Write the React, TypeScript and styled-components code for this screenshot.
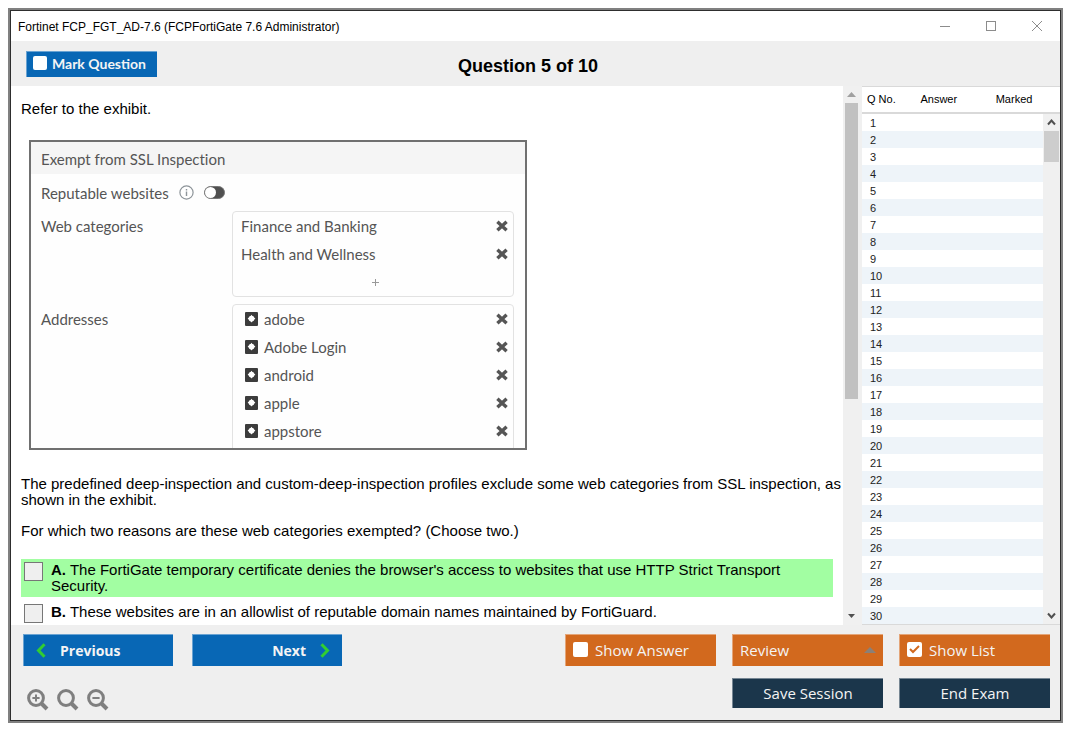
import React, { useState } from "react";
import styled, { createGlobalStyle, css } from "styled-components";

const GlobalStyle = createGlobalStyle`
  *, *::before, *::after { box-sizing: border-box; }
  body { margin: 0; background: #ffffff; color: #000000; font-family: "Liberation Sans", Arial, sans-serif; }
  button { font: inherit; margin: 0; cursor: pointer; }
  p { margin: 0; }
`;

const Page = styled.div`
  display: flex;
  height: 100vh;
  min-height: 480px;
  padding: 8px 12px 12px 8px;
`;

const Bezel = styled.div`
  display: flex;
  flex: 1;
  min-width: 0;
  border: 2px solid #808080;
`;

const Window = styled.main`
  display: flex;
  flex-direction: column;
  flex: 1;
  min-width: 0;
  border: 1px solid #2e2e2e;
  background: #efefef;
`;

const TitleBar = styled.header`
  display: flex;
  align-items: center;
  justify-content: space-between;
  height: 30px;
  padding: 0 9px 0 7px;
  background: #ffffff;
`;

const WindowTitle = styled.h1`
  margin: 0;
  padding-top: 2px;
  font-size: 12px;
  font-weight: 400;
  line-height: 16px;
`;

const WindowButtons = styled.div`
  display: flex;
  gap: 18px;
`;

const WindowButton = styled.button`
  display: flex;
  align-items: center;
  justify-content: center;
  width: 28px;
  height: 28px;
  padding: 0;
  border: 0;
  background: transparent;
  color: #8c8c8c;
`;

const Toolbar = styled.div`
  display: grid;
  grid-template-columns: 1fr auto 1fr;
  align-items: center;
  height: 45px;
  padding: 0 30px 0 15px;
`;

const Counter = styled.h2`
  margin: 0;
  padding-top: 4px;
  font-size: 18px;
  font-weight: 700;
  line-height: 24px;
`;

const tones = { blue: "#0867b5", orange: "#d2691e", navy: "#1b364b" };

const face = css<{ $tone: keyof typeof tones }>`
  display: flex;
  align-items: center;
  border: 0;
  border-top: 1px solid #ffffff66;
  border-left: 1px solid #ffffff66;
  background: ${(p) => tones[p.$tone]};
  color: #f4f4f4;
  font-family: "Open Sans", "Noto Sans", sans-serif;
  white-space: nowrap;
`;

const MarkLabel = styled.label`
  ${face}
  justify-self: start;
  gap: 5px;
  height: 26px;
  width: 131px;
  padding: 0 6px 2px;
  font-family: Lato, "Open Sans", sans-serif;
  font-size: 14px;
  font-weight: 700;
  cursor: pointer;
`;

const ToggleLabel = styled.label`
  ${face}
  gap: 7px;
  width: 151px;
  height: 32px;
  padding: 0 7px 2px;
  font-size: 15px;
  cursor: pointer;
`;

const ActionButton = styled.button<{ $tone: keyof typeof tones; $align?: string; $bold?: boolean; $tall?: boolean }>`
  ${face}
  justify-content: ${(p) => p.$align || "center"};
  gap: ${(p) => (p.$bold ? 14 : 7)}px;
  width: ${(p) => (p.$bold ? 150 : 151)}px;
  height: ${(p) => (p.$tall ? 32 : 30)}px;
  padding: ${(p) => (p.$bold ? "0 12px" : "0 7px 2px")};
  font-size: ${(p) => (p.$bold ? 14 : 15)}px;
  font-weight: ${(p) => (p.$bold ? 700 : 400)};
`;

const Tick = styled.input<{ $size: number }>`
  appearance: none;
  flex: none;
  width: ${(p) => p.$size}px;
  height: ${(p) => p.$size}px;
  margin: 0;
  border-radius: 2px;
  background: #ffffff;
  cursor: pointer;

  &:checked {
    background: #ffffff
      url("data:image/svg+xml,%3Csvg xmlns='http://www.w3.org/2000/svg' viewBox='0 0 15 15'%3E%3Cpath d='M3 7l3 3 6-6' fill='none' stroke='%23d2691e' stroke-width='2'/%3E%3C/svg%3E")
      center / 100% no-repeat;
  }
`;

const Body = styled.div`
  display: flex;
  flex: 1;
  min-height: 0;
`;

const Question = styled.section`
  flex: 1;
  min-width: 0;
  overflow: hidden;
  padding: 15px 0 0 10px;
  background: #ffffff;
  font-size: 15px;
  line-height: 16px;
`;

const Paragraph = styled.p`
  margin-bottom: 15px;
`;

const Exhibit = styled.figure`
  max-width: 498px;
  height: 310px;
  margin: 23px 8px 26px;
  overflow: hidden;
  border: 2px solid #707070;
  background: #fefefe;
  color: #555555;
  font-family: Lato, sans-serif;
  font-size: 15px;
  font-variant-ligatures: none;
  line-height: 28px;
`;

const ExhibitTitle = styled.figcaption`
  padding: 3px 10px 1px;
  background: #f5f5f5;
`;

const ExhibitRow = styled.div`
  display: flex;
  align-items: center;
  gap: 10px;
  height: 37px;
  padding: 0 10px;
`;

const ExhibitField = styled.div`
  display: grid;
  grid-template-columns: 191px 1fr;
  align-items: start;
  margin-bottom: 7px;
  padding: 0 11px 0 10px;
`;

const FieldName = styled.span`
  padding-top: 1px;
`;

const Entries = styled.ul<{ $long?: boolean }>`
  min-height: ${(p) => (p.$long ? 168 : 84)}px;
  margin: 0;
  padding: 0 4px 0 8px;
  border: 1px solid #e2e2e2;
  border-radius: 4px;
  list-style: none;
`;

const Entry = styled.li<{ $icon?: boolean }>`
  display: flex;
  align-items: center;
  gap: 6px;
  height: 28px;
  padding-left: ${(p) => (p.$icon ? 4 : 0)}px;
`;

const EntryName = styled.span`
  flex: 1;
`;

const IconButton = styled.button`
  display: flex;
  align-items: center;
  justify-content: center;
  padding: 0;
  border: 0;
  background: transparent;
  color: inherit;
`;

const AddButton = styled(IconButton)`
  flex: 1;
  color: #999999;
`;

const Answers = styled.div`
  display: flex;
  flex-direction: column;
  gap: 4px;
  padding: 5px 10px 0 0;
`;

const Answer = styled.label<{ $correct?: boolean }>`
  display: flex;
  align-items: flex-start;
  gap: 8px;
  padding: 3px;
  background: ${(p) => (p.$correct ? "#a2fea2" : "transparent")};
`;

const AnswerBox = styled.input`
  appearance: none;
  flex: none;
  width: 19px;
  height: 19px;
  margin: 0;
  border: 1px solid #777777;
  background: #efefef;

  &:checked { background: #0867b5; }
`;

const ScrollTrack = styled.div<{ $wide?: boolean }>`
  display: flex;
  flex-direction: column;
  align-items: center;
  flex: none;
  width: ${(p) => (p.$wide ? 19 : 16)}px;
  padding-right: ${(p) => (p.$wide ? 3 : 0)}px;
  background: #f0f0f0;
`;

const ScrollArrow = styled(IconButton)`
  width: 15px;
  height: 17px;
  color: #505050;
`;

const ScrollThumb = styled.div<{ $size: string; $wide?: boolean }>`
  width: ${(p) => (p.$wide ? 13 : 15)}px;
  height: ${(p) => p.$size};
  margin-bottom: auto;
  background: ${(p) => (p.$wide ? "#c1c1c1" : "#cdcdcd")};
`;

const ListPane = styled.aside`
  display: flex;
  flex-direction: column;
  flex: none;
  width: 198px;
  border-top: 1px solid #d9d9d9;
  border-bottom: 1px solid #d9d9d9;
  background: #ffffff;
  font-size: 11px;
`;

const ListScroll = styled.div`
  position: relative;
  display: flex;
  flex: 1;
  min-height: 0;
`;

const TableClip = styled.div`
  flex: 1;
  overflow: hidden;
`;

const Table = styled.table`
  width: 198px;
  border-collapse: collapse;
  table-layout: fixed;
  text-align: left;
`;

const HeadCell = styled.th`
  height: 26px;
  padding: 0 0 2px 5px;
  border-bottom: 2px solid #d9d9d9;
  font-weight: 400;
`;

const Row = styled.tr<{ $shaded: boolean }>`
  background: ${(p) => (p.$shaded ? "#eef4f9" : "#ffffff")};
`;

const Cell = styled.td`
  height: 17px;
  padding: 1px 0 0 8px;
  color: #222222;
  line-height: 16px;
`;

const ListTrack = styled.div`
  position: absolute;
  top: 27px;
  right: 0;
  bottom: 0;
  display: flex;
  padding-right: 1px;
  background: #f0f0f0;
`;

const Footer = styled.footer`
  display: flex;
  flex-direction: column;
  gap: 12px;
  padding: 9px 10px 12px 12px;
`;

const FooterRow = styled.div<{ $height: number }>`
  display: flex;
  align-items: flex-start;
  justify-content: space-between;
  height: ${(p) => p.$height}px;
`;

const Group = styled.div<{ $gap: number }>`
  display: flex;
  gap: ${(p) => p.$gap}px;
`;

const ZoomGroup = styled.div`
  display: flex;
  gap: 8px;
  padding: 11px 4px 0;
  color: #7f7f7f;
`;

const CrossIcon = () => (
  <svg width="14" height="12" viewBox="0 0 14 12" stroke="currentColor" strokeWidth="3.4" aria-hidden="true">
    <path d="M2.4 1.8L11.6 10.2M11.6 1.8L2.4 10.2" />
  </svg>
);

const AddressIcon = () => (
  <svg width="13" height="14" viewBox="0 0 13 14" aria-hidden="true">
    <rect width="13" height="14" rx="1" fill="#3c3c3c" />
    <path d="M6.5 2.8L8 5 10.4 6.5 8 8.4 6.5 10.4 5 8.4 2.6 6.5 5 5z" fill="#ffffff" />
    <circle cx="6.5" cy="6.6" r="2.9" fill="#ffffff" />
  </svg>
);

const Chevron = ({ right }: { right?: boolean }) => (
  <svg width="10" height="15" viewBox="0 0 10 15" fill="none" stroke="#32cd32" strokeWidth="3" aria-hidden="true">
    <path d={right ? "M1.5 1.2L7.5 7.5 1.5 13.8" : "M8.5 1.2L2.5 7.5 8.5 13.8"} />
  </svg>
);

const Magnifier = ({ sign }: { sign?: string }) => (
  <svg width="22" height="22" viewBox="0 0 22 22" fill="none" stroke="currentColor" aria-hidden="true">
    <circle cx="9" cy="9" r="7.4" strokeWidth="3" />
    <path d="M14 14L20 20" strokeWidth="4" />
    {sign && <path d={sign} strokeWidth="2" />}
  </svg>
);

const categories = ["Finance and Banking", "Health and Wellness"];
const addresses = ["adobe", "Adobe Login", "android", "apple", "appstore"];
const questionNumbers = Array.from({ length: 30 }, (_, i) => i + 1);

export default function App() {
  const [showList, setShowList] = useState(true);

  return (
    <Page>
      <GlobalStyle />
      <Bezel>
        <Window>
          <TitleBar>
            <WindowTitle>Fortinet FCP_FGT_AD-7.6 (FCPFortiGate 7.6 Administrator)</WindowTitle>
            <WindowButtons>
              <WindowButton aria-label="Minimize">
                <svg width="12" height="12" stroke="currentColor"><path d="M1 6.5H11" /></svg>
              </WindowButton>
              <WindowButton aria-label="Maximize">
                <svg width="12" height="12" fill="none" stroke="currentColor"><rect x="1.5" y="1.5" width="9" height="9" /></svg>
              </WindowButton>
              <WindowButton aria-label="Close">
                <svg width="12" height="12" stroke="currentColor"><path d="M1 1L11 11M11 1L1 11" /></svg>
              </WindowButton>
            </WindowButtons>
          </TitleBar>

          <Toolbar>
            <MarkLabel $tone="blue">
              <Tick type="checkbox" $size={14} />
              Mark Question
            </MarkLabel>
            <Counter>Question 5 of 10</Counter>
          </Toolbar>

          <Body>
            <Question>
              <p>Refer to the exhibit.</p>
              <Exhibit>
                <ExhibitTitle>Exempt from SSL Inspection</ExhibitTitle>
                <ExhibitRow>
                  Reputable websites
                  <svg width="15" height="15" viewBox="0 0 15 15" fill="none" stroke="#8d9499" aria-hidden="true">
                    <circle cx="7.5" cy="7.5" r="6.6" strokeWidth="1.2" />
                    <path d="M7.5 6.5V11M7.5 4V5.4" strokeWidth="1.4" />
                  </svg>
                  <svg width="21" height="13" viewBox="0 0 21 13" aria-hidden="true">
                    <rect x="0.5" y="0.5" width="20" height="12" rx="6" fill="#505050" stroke="#777777" />
                    <circle cx="6.5" cy="6.5" r="5.5" fill="#ffffff" />
                  </svg>
                </ExhibitRow>
                <ExhibitField>
                  <FieldName>Web categories</FieldName>
                  <Entries>
                    {categories.map((name) => (
                      <Entry key={name}>
                        <EntryName>{name}</EntryName>
                        <IconButton aria-label={`Remove ${name}`}><CrossIcon /></IconButton>
                      </Entry>
                    ))}
                    <Entry>
                      <AddButton aria-label="Add category">
                        <svg width="7" height="7" stroke="currentColor"><path d="M3.5 0V7M0 3.5H7" /></svg>
                      </AddButton>
                    </Entry>
                  </Entries>
                </ExhibitField>
                <ExhibitField>
                  <FieldName>Addresses</FieldName>
                  <Entries $long>
                    {addresses.map((name) => (
                      <Entry key={name} $icon>
                        <AddressIcon />
                        <EntryName>{name}</EntryName>
                        <IconButton aria-label={`Remove ${name}`}><CrossIcon /></IconButton>
                      </Entry>
                    ))}
                  </Entries>
                </ExhibitField>
              </Exhibit>
              <Paragraph>
                The predefined deep-inspection and custom-deep-inspection profiles exclude some web categories from SSL
                inspection, as shown in the exhibit.
              </Paragraph>
              <Paragraph>For which two reasons are these web categories exempted? (Choose two.)</Paragraph>
              <Answers>
                <Answer $correct>
                  <AnswerBox type="checkbox" />
                  <span>
                    <b>A.</b> The FortiGate temporary certificate denies the browser's access to websites that use HTTP
                    Strict Transport Security.
                  </span>
                </Answer>
                <Answer>
                  <AnswerBox type="checkbox" />
                  <span>
                    <b>B.</b> These websites are in an allowlist of reputable domain names maintained by FortiGuard.
                  </span>
                </Answer>
              </Answers>
            </Question>
            <ScrollTrack $wide>
              <ScrollArrow aria-label="Scroll question up">
                <svg width="9" height="5" fill="#a0a0a0"><path d="M4.5 0L9 5H0z" /></svg>
              </ScrollArrow>
              <ScrollThumb $wide $size="55%" />
              <ScrollArrow aria-label="Scroll question down">
                <svg width="9" height="5" fill="currentColor"><path d="M1 0H8L4.5 4z" /></svg>
              </ScrollArrow>
            </ScrollTrack>

            {showList && (
              <ListPane>
                <ListScroll>
                  <TableClip>
                    <Table>
                      <colgroup>
                        <col style={{ width: "27%" }} />
                        <col style={{ width: "38%" }} />
                        <col />
                      </colgroup>
                      <thead>
                        <tr>
                          <HeadCell>Q No.</HeadCell>
                          <HeadCell>Answer</HeadCell>
                          <HeadCell>Marked</HeadCell>
                        </tr>
                      </thead>
                      <tbody>
                        {questionNumbers.map((n) => (
                          <Row key={n} $shaded={n % 2 === 0}>
                            <Cell>{n}</Cell>
                            <Cell />
                            <Cell />
                          </Row>
                        ))}
                      </tbody>
                    </Table>
                  </TableClip>
                  <ListTrack>
                    <ScrollTrack>
                      <ScrollArrow aria-label="Scroll list up">
                        <svg width="9" height="7" fill="none" stroke="currentColor" strokeWidth="2"><path d="M1 5.5L4.5 1.5 8 5.5" /></svg>
                      </ScrollArrow>
                      <ScrollThumb $size="31px" />
                      <ScrollArrow aria-label="Scroll list down">
                        <svg width="9" height="7" fill="none" stroke="currentColor" strokeWidth="2"><path d="M1 1.5L4.5 5.5 8 1.5" /></svg>
                      </ScrollArrow>
                    </ScrollTrack>
                  </ListTrack>
                </ListScroll>
              </ListPane>
            )}
          </Body>

          <Footer>
            <FooterRow $height={32}>
              <Group $gap={19}>
                <ActionButton $tone="blue" $align="flex-start" $bold $tall>
                  <Chevron />
                  Previous
                </ActionButton>
                <ActionButton $tone="blue" $align="flex-end" $bold $tall>
                  Next
                  <Chevron right />
                </ActionButton>
              </Group>
              <Group $gap={16}>
                <ToggleLabel $tone="orange">
                  <Tick type="checkbox" $size={15} />
                  Show Answer
                </ToggleLabel>
                <ActionButton $tone="orange" $align="space-between" $tall aria-haspopup="menu">
                  Review
                  <svg width="12" height="6" fill="#8a8078" aria-hidden="true"><path d="M6 0L12 6H0z" /></svg>
                </ActionButton>
                <ToggleLabel $tone="orange">
                  <Tick
                    type="checkbox"
                    $size={15}
                    checked={showList}
                    onChange={(e) => setShowList(e.target.checked)}
                  />
                  Show List
                </ToggleLabel>
              </Group>
            </FooterRow>
            <FooterRow $height={30}>
              <ZoomGroup>
                <IconButton aria-label="Zoom in"><Magnifier sign="M9 5.4V12.6M5.4 9H12.6" /></IconButton>
                <IconButton aria-label="Reset zoom"><Magnifier /></IconButton>
                <IconButton aria-label="Zoom out"><Magnifier sign="M5.4 9H12.6" /></IconButton>
              </ZoomGroup>
              <Group $gap={16}>
                <ActionButton $tone="navy">Save Session</ActionButton>
                <ActionButton $tone="navy">End Exam</ActionButton>
              </Group>
            </FooterRow>
          </Footer>
        </Window>
      </Bezel>
    </Page>
  );
}
